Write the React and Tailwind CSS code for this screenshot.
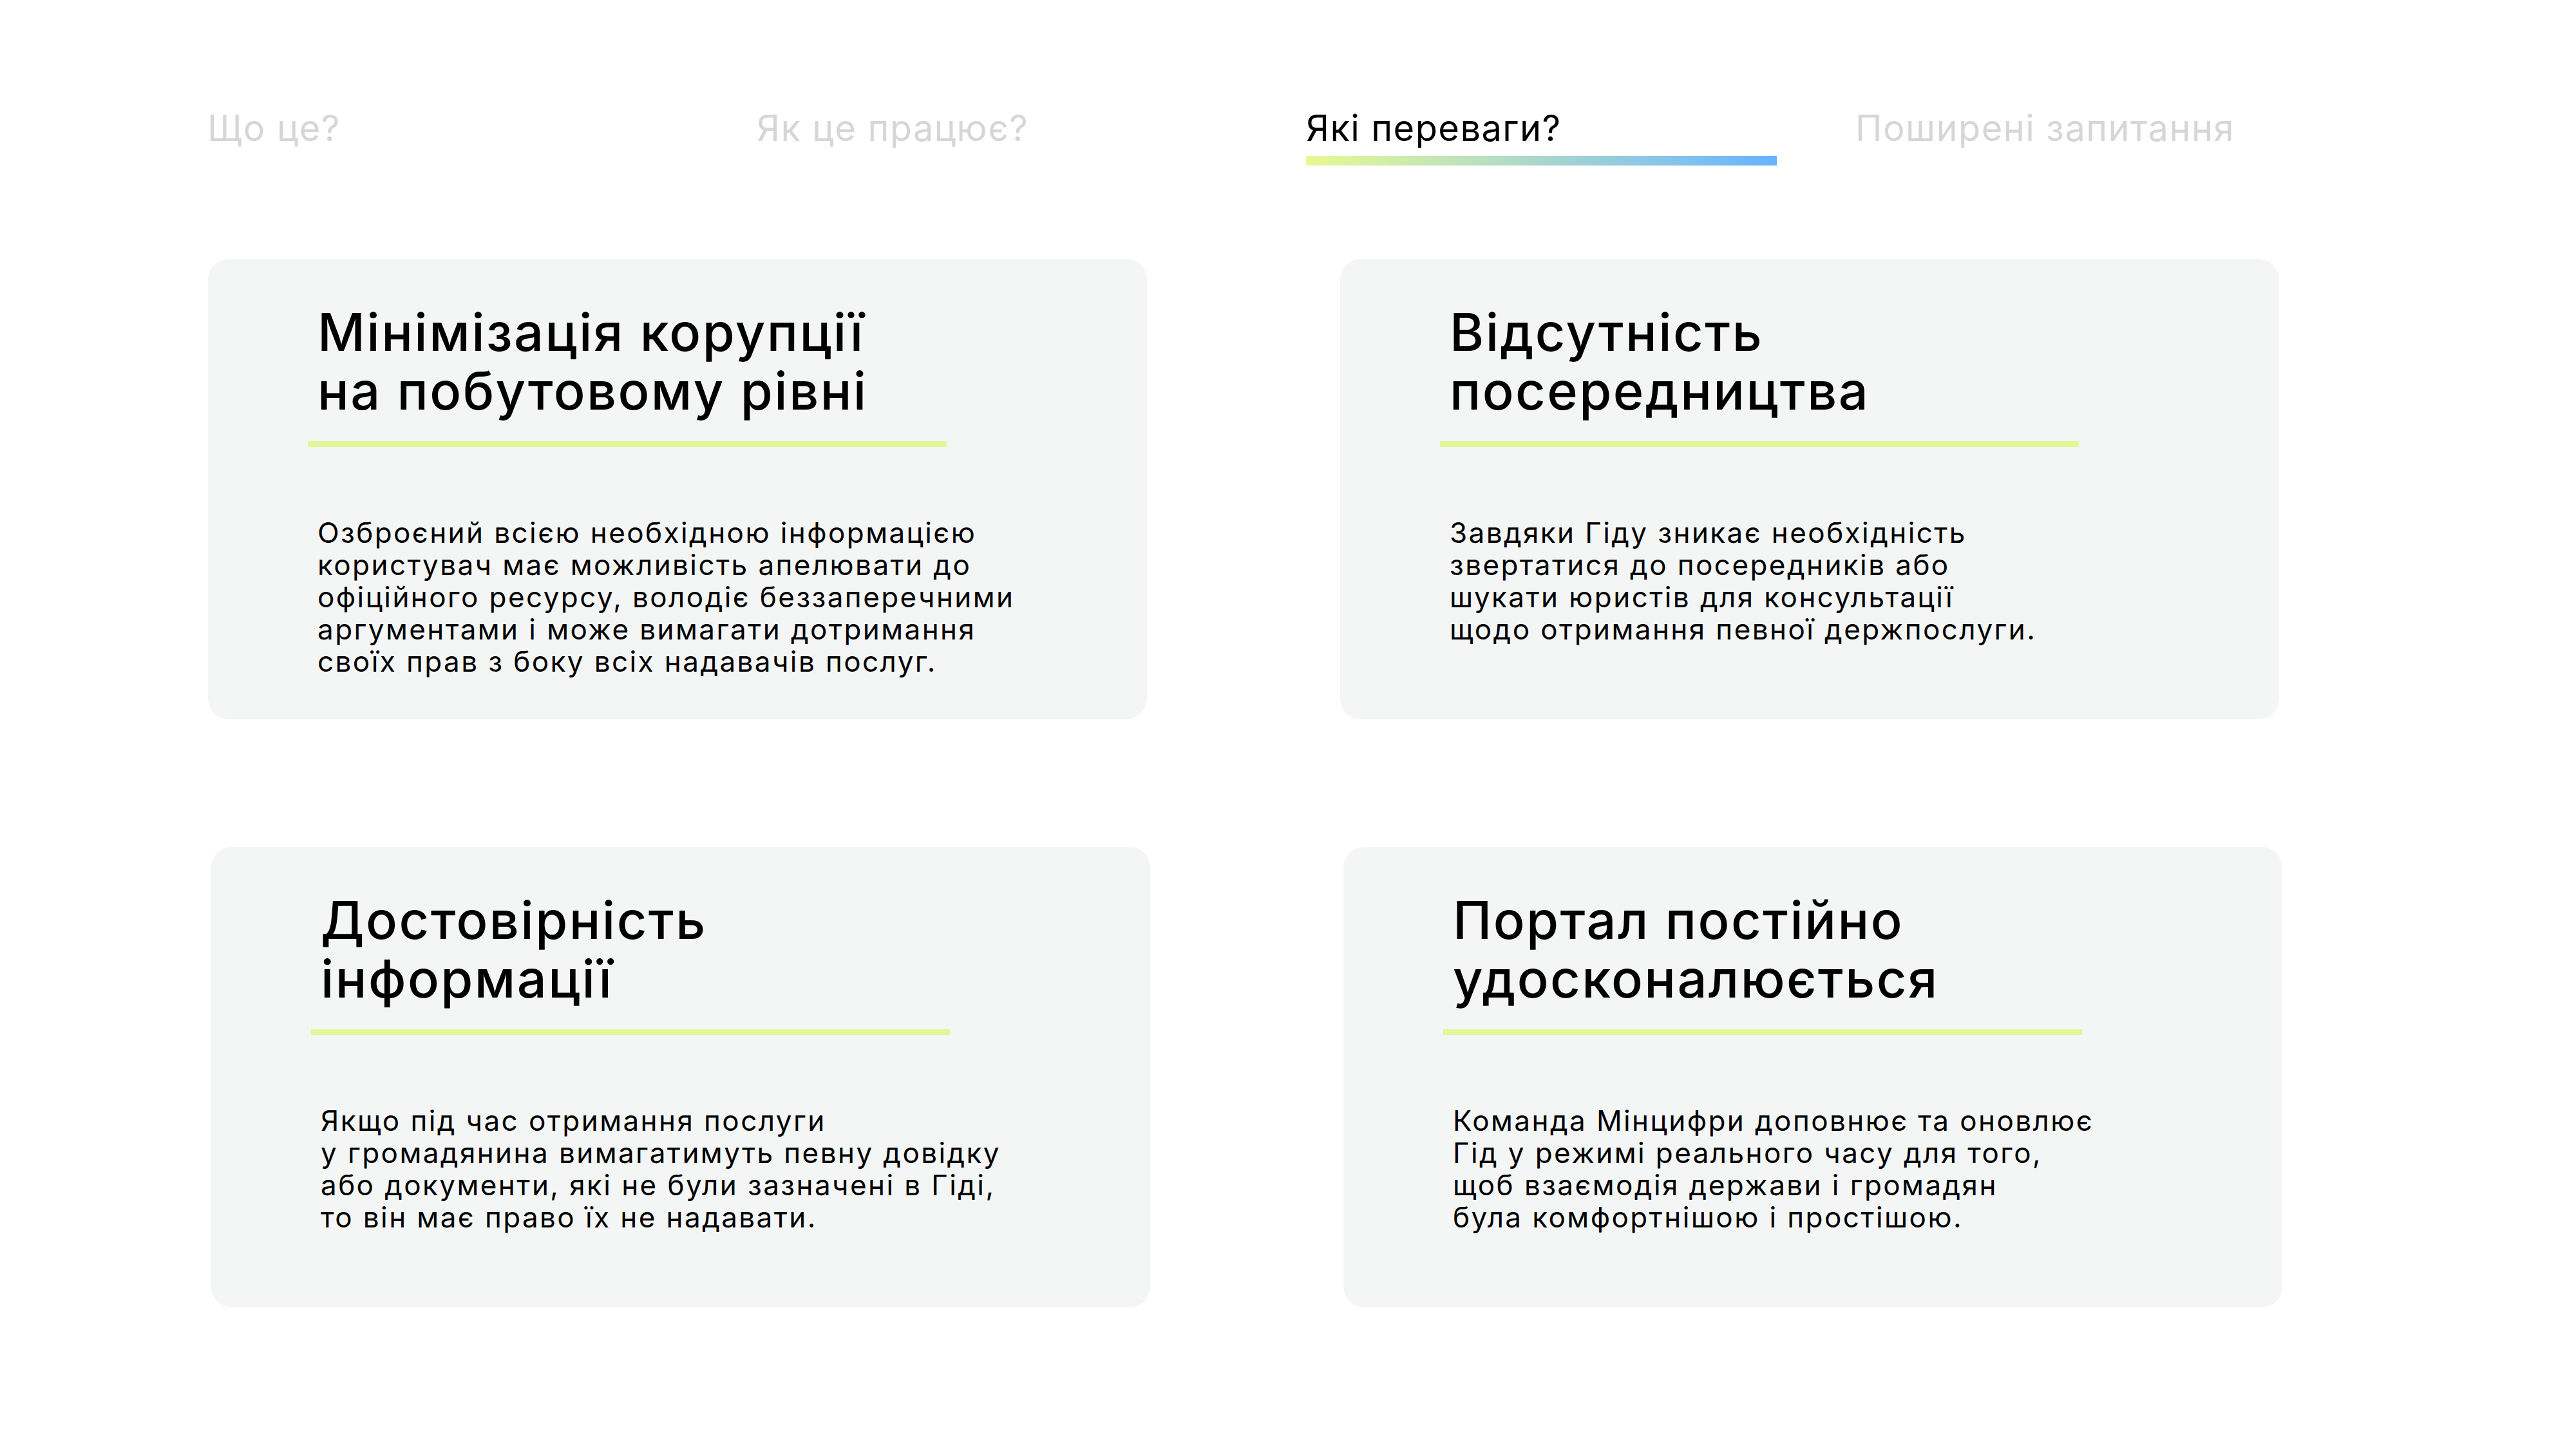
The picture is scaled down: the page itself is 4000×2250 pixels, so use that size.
import React from "react";

const cards = [
  {
    title: ["Мінімізація корупції", "на побутовому рівні"],
    body: [
      "Озброєний всією необхідною інформацією",
      "користувач має можливість апелювати до",
      "офіційного ресурсу, володіє беззаперечними",
      "аргументами і може вимагати дотримання",
      "своїх прав з боку всіх надавачів послуг.",
    ],
  },
  {
    title: ["Відсутність", "посередництва"],
    body: [
      "Завдяки Гіду зникає необхідність",
      "звертатися до посередників або",
      "шукати юристів для консультації",
      "щодо отримання певної держпослуги.",
    ],
  },
  {
    title: ["Достовірність", "інформації"],
    body: [
      "Якщо під час отримання послуги",
      "у громадянина вимагатимуть певну довідку",
      "або документи, які не були зазначені в Гіді,",
      "то він має право їх не надавати.",
    ],
  },
  {
    title: ["Портал постійно", "удосконалюється"],
    body: [
      "Команда Мінцифри доповнює та оновлює",
      "Гід у режимі реального часу для того,",
      "щоб взаємодія держави і громадян",
      "була комфортнішою і простішою.",
    ],
  },
];

const tabs = ["Що це?", "Як це працює?", "Які переваги?", "Поширені запитання"];

function Card({ c }) {
  return (
    <div className="w-[1458px] h-[715px] rounded-[32px] bg-[#f4f6f5] pt-[69px] pl-[170px]">
      <h2 className="text-[81px] leading-[91px] font-medium tracking-[0.03em] text-black whitespace-nowrap">
        {c.title[0]}
        <br />
        {c.title[1]}
      </h2>
      <div className="mt-[32px] -ml-[15px] w-[992px] h-[9px] bg-[#e4f796]" />
      <p className="mt-[108px] text-[44px] leading-[50px] tracking-[0.055em] text-black whitespace-nowrap">
        {c.body.map((l, i) => (
          <React.Fragment key={i}>
            {l}
            {i < c.body.length - 1 && <br />}
          </React.Fragment>
        ))}
      </p>
    </div>
  );
}

export default function App() {
  return (
    <div
      className="w-[4000px] h-[2250px] bg-white overflow-hidden"
      style={{ fontFamily: "Inter, 'Noto Sans', sans-serif" }}
    >
      <nav className="flex pl-[322px] pt-[171px]">
        {tabs.map((t, i) => (
          <div key={i} className="w-[853px] shrink-0">
            <div
              className={
                "text-[56px] leading-[56px] tracking-[0.025em] whitespace-nowrap " +
                (i === 2 ? "text-black" : "text-[#d6d6d6]")
              }
            >
              {t}
            </div>
            {i === 2 ? (
              <div className="mt-[15px] w-[731px] h-[15px] bg-gradient-to-r from-[#e7f98f] via-[#a9d6cc] to-[#66b2ff]" />
            ) : (
              <div className="mt-[15px] h-[15px]" />
            )}
          </div>
        ))}
      </nav>
      <div className="pl-[323px] pt-[145px] flex flex-col gap-[198px]">
        <div className="flex gap-[300px]">
          <Card c={cards[0]} />
          <Card c={cards[1]} />
        </div>
        <div className="flex gap-[300px] ml-[5px]">
          <Card c={cards[2]} />
          <Card c={cards[3]} />
        </div>
      </div>
    </div>
  );
}
